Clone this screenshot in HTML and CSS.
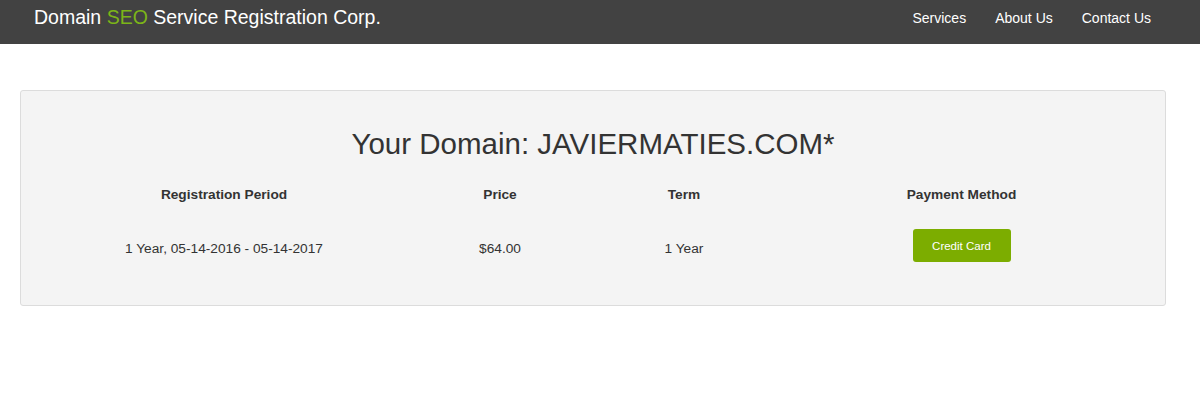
FILE: index.html
```html
<!DOCTYPE html>
<html>
<head>
<meta charset="utf-8">
<link rel="stylesheet" href="styles.css">
</head>
<body>
<header class="navbar">
  <div class="brand">Domain <span class="seo">SEO</span> Service Registration Corp.</div>
  <nav class="nav">
    <a href="#">Services</a>
    <a href="#">About Us</a>
    <a href="#">Contact Us</a>
  </nav>
</header>
<main class="main">
  <section class="panel">
    <h1 class="title">Your Domain: JAVIERMATIES.COM*</h1>
    <table class="info">
      <colgroup>
        <col class="c1"><col class="c2"><col class="c3"><col class="c4">
      </colgroup>
      <thead>
        <tr><th>Registration Period</th><th>Price</th><th>Term</th><th class="pm">Payment Method</th></tr>
      </thead>
      <tbody>
        <tr>
          <td>1 Year, 05-14-2016 - 05-14-2017</td>
          <td>$64.00</td>
          <td>1 Year</td>
          <td><button class="btn">Credit Card</button></td>
        </tr>
      </tbody>
    </table>
  </section>
</main>
</body>
</html>
```
FILE: styles.css
```css
* { box-sizing: border-box; }
body {
  margin: 0;
  font-family: "Liberation Sans", Arial, sans-serif;
  color: #333;
  background: #fff;
}
.navbar {
  height: 44px;
  background: #424242;
  display: flex;
  align-items: center;
  justify-content: space-between;
  padding: 0 49px 0 34px;
}
.brand {
  color: #fff;
  font-size: 19.5px;
  line-height: 1;
  margin-top: -8px;
}
.seo { color: #7cb518; }
.nav {
  display: flex;
  gap: 29px;
  margin-top: -8px;
}
.nav a {
  color: #fff;
  text-decoration: none;
  font-size: 14px;
}
.main {
  padding: 46px 34px 0 20px;
}
.panel {
  background: #f4f4f4;
  border: 1px solid #dcdcdc;
  border-radius: 3px;
  padding: 35px 20px 37px;
}
.title {
  margin: 0 0 24px;
  text-align: center;
  font-weight: normal;
  font-size: 29.5px;
  line-height: 36px;
  color: #333;
}
.info {
  width: 100%;
  border-collapse: collapse;
  text-align: center;
  font-size: 13.7px;
}
.c1 { width: 366px; }
.c2 { width: 186px; }
.c3 { width: 182px; }
.info th {
  font-weight: bold;
  padding: 0 0 25px;
  line-height: 18px;
}
.info th.pm { padding-left: 3px; }
.info td {
  padding: 0;
  line-height: 18px;
  vertical-align: middle;
}
.btn {
  display: inline-block;
  vertical-align: top;
  background: #7cad00;
  color: #fff;
  border: none;
  border-radius: 3px;
  width: 98px;
  height: 33px;
  font-family: "Liberation Sans", Arial, sans-serif;
  font-size: 11.5px;
  padding: 0;
  margin: 0 0 6px 3px;
}
```
